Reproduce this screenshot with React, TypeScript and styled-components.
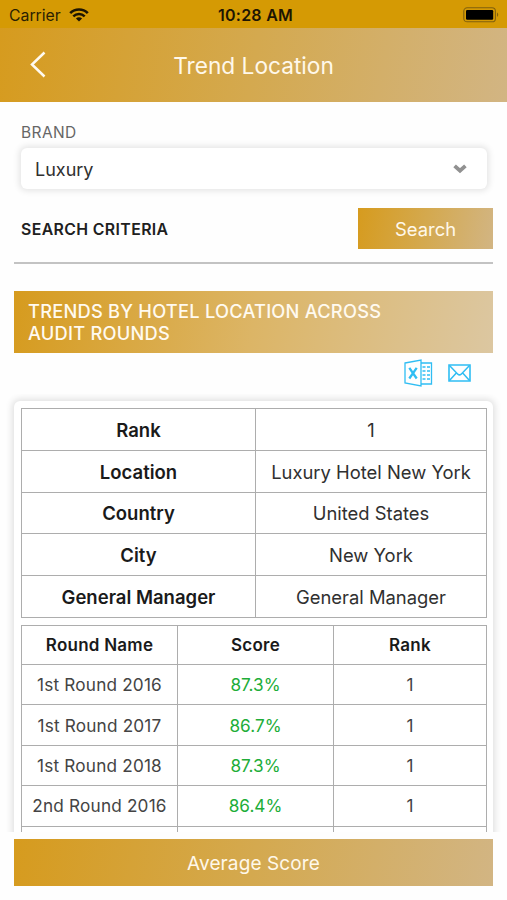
import React from "react";
import styled, { createGlobalStyle } from "styled-components";

const GlobalStyle = createGlobalStyle`
  * { box-sizing: border-box; }
  html, body { margin: 0; padding: 0; background: #fefefe; }
  body { font-family: Inter, "Liberation Sans", sans-serif; color: #2b2b2b; }
`;

const gold = "linear-gradient(100deg, #d69b1e 0%, #d4a94f 50%, #d2b583 100%)";
const line = "#adadad";

const Screen = styled.div`
  width: 507px;
  height: 900px;
  display: flex;
  flex-direction: column;
  overflow: hidden;
  background: #fefefe;
`;

const StatusBar = styled.div`
  height: 28px;
  flex: none;
  display: grid;
  grid-template-columns: 1fr auto 1fr;
  align-items: center;
  padding: 2px 7px 0 9px;
  background: #d59a04;
  color: #2b1f02;
`;

const Carrier = styled.div`
  display: flex;
  align-items: center;
  gap: 8px;
  font-size: 15.8px;
`;

const Clock = styled.div`
  font-size: 16px;
  font-weight: 600;
  letter-spacing: 0.25px;
  color: #1d1502;
  padding-left: 2px;
`;

const Battery = styled.svg`
  justify-self: end;
  display: block;
`;

const Header = styled.header`
  height: 73.5px;
  flex: none;
  display: grid;
  grid-template-columns: 76px 1fr 76px;
  align-items: center;
  background: ${gold};
`;

const BackButton = styled.button`
  display: flex;
  border: 0;
  padding: 0 0 0 30px;
  background: none;
  color: #fffaf0;
`;

const Title = styled.h1`
  margin: 0;
  padding-top: 1px;
  text-align: center;
  font-size: 22.7px;
  font-weight: 400;
  color: #fff8ea;
`;

const Filters = styled.section`
  flex: none;
  margin: 0 14px;
  height: 162.5px;
  border-bottom: 2px solid #c3c3c3;
  padding: 21px 0 0 7px;
`;

const FieldLabel = styled.label`
  display: block;
  height: 25.5px;
  line-height: 19px;
  font-size: 15.5px;
  letter-spacing: 0.4px;
  color: #666;
`;

const Select = styled.div`
  height: 41px;
  margin-right: 6px;
  padding: 1px 20px 0 14px;
  display: flex;
  align-items: center;
  justify-content: space-between;
  border-radius: 6px;
  background: #fff;
  box-shadow: 0 0 6px 2px rgba(0, 0, 0, 0.1);
  font-size: 18px;
  color: #303030;
`;

const Criteria = styled.div`
  margin-top: 19px;
  display: flex;
  align-items: center;
  justify-content: space-between;
`;

const CriteriaTitle = styled.h2`
  margin: 0;
  padding-top: 2px;
  font-size: 15.8px;
  font-weight: 600;
  letter-spacing: 0.4px;
  color: #202020;
`;

const SearchButton = styled.button`
  width: 135px;
  height: 41px;
  border: 0;
  background: ${gold};
  color: #fff8ea;
  font: 400 18.4px Inter, sans-serif;
`;

const Banner = styled.h2`
  flex: none;
  margin: 27px 14px 0;
  height: 61.5px;
  padding: 9px 80px 0 14px;
  background: linear-gradient(100deg, #d69b1e 0%, #dcb566 50%, #dcc7a1 100%);
  color: #fffaf0;
  font-size: 18.3px;
  line-height: 22px;
  letter-spacing: 0.22px;
  font-weight: 500;
`;

const Actions = styled.div`
  flex: none;
  height: 48.5px;
  padding: 7px 36px 14px 0;
  display: flex;
  justify-content: flex-end;
  align-items: center;
  gap: 15px;
`;

const Scroll = styled.div`
  flex: none;
  height: 438px;
  margin-top: -7px;
  padding: 7px 14px 0;
  overflow: hidden;
`;

const Card = styled.div`
  height: 480px;
  padding: 7px 7px 0;
  border-radius: 6px;
  background: #fff;
  box-shadow: 0 0 7px 2px rgba(0, 0, 0, 0.12);
`;

const Table = styled.table<{ $top?: number }>`
  width: 466px;
  margin-top: ${(p) => p.$top ?? 0}px;
  table-layout: fixed;
  border-collapse: collapse;
`;

const Cell = styled.td<{ $h: number; $size: number; $spacing?: number; $strong?: boolean; $tone?: string }>`
  height: ${(p) => p.$h}px;
  padding: 1px 0 0;
  border: 1px solid ${line};
  text-align: center;
  line-height: 22px;
  font-size: ${(p) => p.$size}px;
  letter-spacing: ${(p) => p.$spacing ?? 0}px;
  font-weight: ${(p) => (p.$strong ? 600 : 400)};
  color: ${(p) => p.$tone ?? (p.$strong ? "#1a1a1a" : "#303030")};
`;

const Footer = styled.button`
  flex: none;
  margin: 7px 14px 0;
  height: 47px;
  padding: 2px 0 0;
  border: 0;
  background: ${gold};
  color: #fff8ea;
  font: 400 19px Inter, sans-serif;
  letter-spacing: 0.1px;
`;

const facts = [
  ["Rank", "1"],
  ["Location", "Luxury Hotel New York"],
  ["Country", "United States"],
  ["City", "New York"],
  ["General Manager", "General Manager"],
];

const rounds = [
  ["1st Round 2016", "87.3%", "1"],
  ["1st Round 2017", "86.7%", "1"],
  ["1st Round 2018", "87.3%", "1"],
  ["2nd Round 2016", "86.4%", "1"],
  ["", "", ""],
];

const WifiIcon = () => (
  <svg width="20" height="14" viewBox="0 0 20 14" fill="none" stroke="#1d1502">
    <path d="M1.2 5.1C6.1.3 13.9.3 18.8 5.1" strokeWidth="2.7" />
    <path d="M4.3 8.4c3.2-3.1 8.2-3.1 11.4 0" strokeWidth="2.5" />
    <path d="M10 13.6 6.9 10.5c1.7-1.6 4.5-1.6 6.2 0z" fill="#1d1502" stroke="none" />
  </svg>
);

const ExcelIcon = () => (
  <svg width="29" height="28" viewBox="0 0 29 28" fill="none" stroke="#2fbdf3" strokeWidth="1.3">
    <path d="M1 4 17 1v26L1 24z" />
    <path d="M17 4h10.5v21H17" />
    <path d="M18.5 8h3M23 8h3M18.5 12h3M23 12h3M18.5 16h3M23 16h3M18.5 20h3M23 20h3" strokeWidth="1.5" />
    <path d="m5.3 8.8 7.4 10.7M12.7 8.8 5.3 19.5" strokeWidth="2.3" />
  </svg>
);

const MailIcon = () => (
  <svg width="23" height="18" viewBox="0 0 23 18" fill="none" stroke="#2fbdf3" strokeWidth="1.6">
    <path d="M1 1h21v16H1z" />
    <path d="m1.5 1.5 8.3 8.7q1.7 1.4 3.4 0l8.3-8.7M1.5 16.5l6.8-7.6M21.5 16.5l-6.8-7.6" strokeWidth="1.5" />
  </svg>
);

export default function App() {
  return (
    <>
      <GlobalStyle />
      <Screen>
        <StatusBar>
          <Carrier>
            Carrier
            <WifiIcon />
          </Carrier>
          <Clock>10:28 AM</Clock>
          <Battery width="37" height="16" viewBox="0 0 37 16">
            <rect x="0.8" y="0.8" width="31.6" height="14" rx="3.4" fill="none" stroke="#80600e" strokeWidth="1.1" />
            <rect x="3" y="3" width="27.2" height="9.8" rx="1.2" fill="#000" />
            <path d="M34 5.6q2.5 2.2 0 4.4z" fill="#80600e" />
          </Battery>
        </StatusBar>
        <Header>
          <BackButton aria-label="Back">
            <svg width="16" height="27" viewBox="0 0 16 27" fill="none" stroke="currentColor" strokeWidth="2.5">
              <path d="M14.5 1.5 2 13.5l12.5 12" />
            </svg>
          </BackButton>
          <Title>Trend Location</Title>
        </Header>
        <Filters>
          <FieldLabel>BRAND</FieldLabel>
          <Select>
            Luxury
            <svg width="14" height="10" viewBox="0 0 14 10" fill="none" stroke="#919191" strokeWidth="3.8">
              <path d="m1.6 1.8 5.4 4.9 5.4-4.9" />
            </svg>
          </Select>
          <Criteria>
            <CriteriaTitle>SEARCH CRITERIA</CriteriaTitle>
            <SearchButton>Search</SearchButton>
          </Criteria>
        </Filters>
        <Banner>
          TRENDS BY HOTEL LOCATION ACROSS
          <br />
          AUDIT ROUNDS
        </Banner>
        <Actions>
          <ExcelIcon />
          <MailIcon />
        </Actions>
        <Scroll>
          <Card>
            <Table>
              <colgroup>
                <col width="234" />
                <col />
              </colgroup>
              <tbody>
                {facts.map(([name, value]) => (
                  <tr key={name}>
                    <Cell as="th" $h={41.8} $size={18.5} $strong>{name}</Cell>
                    <Cell $h={41.8} $size={18.4}>{value}</Cell>
                  </tr>
                ))}
              </tbody>
            </Table>
            <Table $top={7}>
              <colgroup>
                <col width="156" />
                <col width="156" />
                <col />
              </colgroup>
              <tbody>
                <tr>
                  {["Round Name", "Score", "Rank"].map((h) => (
                    <Cell as="th" key={h} $h={39} $size={17} $spacing={0.25} $strong>{h}</Cell>
                  ))}
                </tr>
                {rounds.map(([name, score, rank], i) => (
                  <tr key={i}>
                    <Cell $h={40.4} $size={17.2} $spacing={0.18} $tone="#444">{name}</Cell>
                    <Cell $h={40.4} $size={17.2} $tone="#20ad38">{score}</Cell>
                    <Cell $h={40.4} $size={17.2} $tone="#444">{rank}</Cell>
                  </tr>
                ))}
              </tbody>
            </Table>
          </Card>
        </Scroll>
        <Footer>Average Score</Footer>
      </Screen>
    </>
  );
}
